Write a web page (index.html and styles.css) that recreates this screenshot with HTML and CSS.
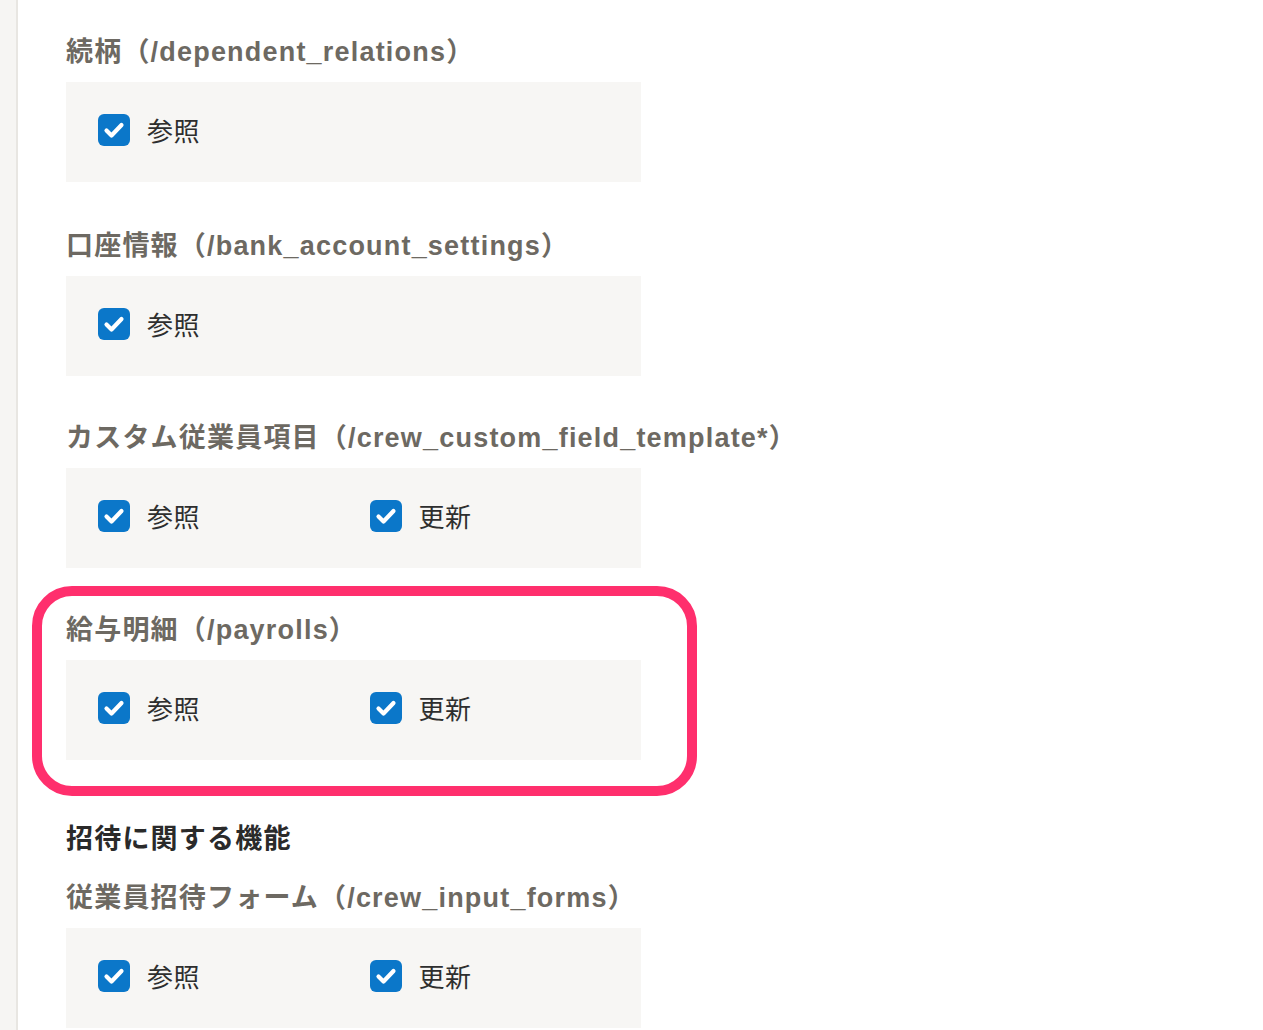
FILE: index.html
```html
<!DOCTYPE html>
<html lang="ja">
<head>
<meta charset="utf-8">
<link rel="stylesheet" href="styles.css">
</head>
<body>
<div class="layout">
  <aside class="sidebar"></aside>
  <main class="content">
    <section class="perm">
      <h3 class="perm-title">続柄（/dependent_relations）</h3>
      <div class="perm-box">
        <label class="check"><span class="box"><svg viewBox="0 0 32 32"><path d="M8.5 16.5 L13.5 21.5 L23.5 11" /></svg></span><span class="label">参照</span></label>
      </div>
    </section>
    <section class="perm">
      <h3 class="perm-title">口座情報（/bank_account_settings）</h3>
      <div class="perm-box">
        <label class="check"><span class="box"><svg viewBox="0 0 32 32"><path d="M8.5 16.5 L13.5 21.5 L23.5 11" /></svg></span><span class="label">参照</span></label>
      </div>
    </section>
    <section class="perm">
      <h3 class="perm-title">カスタム従業員項目（/crew_custom_field_template*）</h3>
      <div class="perm-box">
        <label class="check"><span class="box"><svg viewBox="0 0 32 32"><path d="M8.5 16.5 L13.5 21.5 L23.5 11" /></svg></span><span class="label">参照</span></label>
        <label class="check"><span class="box"><svg viewBox="0 0 32 32"><path d="M8.5 16.5 L13.5 21.5 L23.5 11" /></svg></span><span class="label">更新</span></label>
      </div>
    </section>
    <section class="perm highlighted">
      <h3 class="perm-title">給与明細（/payrolls）</h3>
      <div class="perm-box">
        <label class="check"><span class="box"><svg viewBox="0 0 32 32"><path d="M8.5 16.5 L13.5 21.5 L23.5 11" /></svg></span><span class="label">参照</span></label>
        <label class="check"><span class="box"><svg viewBox="0 0 32 32"><path d="M8.5 16.5 L13.5 21.5 L23.5 11" /></svg></span><span class="label">更新</span></label>
      </div>
    </section>
    <h2 class="group-title">招待に関する機能</h2>
    <section class="perm">
      <h3 class="perm-title">従業員招待フォーム（/crew_input_forms）</h3>
      <div class="perm-box">
        <label class="check"><span class="box"><svg viewBox="0 0 32 32"><path d="M8.5 16.5 L13.5 21.5 L23.5 11" /></svg></span><span class="label">参照</span></label>
        <label class="check"><span class="box"><svg viewBox="0 0 32 32"><path d="M8.5 16.5 L13.5 21.5 L23.5 11" /></svg></span><span class="label">更新</span></label>
      </div>
    </section>
  </main>
</div>
</body>
</html>
```

FILE: styles.css
```css
html, body {
  margin: 0;
  padding: 0;
  background: #ffffff;
  height: 100%;
  overflow: hidden;
}
body {
  font-family: "Noto Sans CJK JP", "Noto Sans", sans-serif;
}
.layout {
  display: flex;
  min-height: 1030px;
}
.sidebar {
  width: 16px;
  flex: 0 0 16px;
  background: #f6f5f3;
  border-right: 2px solid #e8e6e2;
}
.content {
  padding: 34px 0 0 48px;
  flex: 1;
}
.perm {
  margin: 0 0 44px 0;
  position: relative;
}
.perm:first-child {
  margin-bottom: 46px;
}
.perm-title {
  margin: 0 0 12px 0;
  font-family: "Liberation Sans", "Noto Sans CJK JP", sans-serif;
  font-size: 27px;
  line-height: 36px;
  font-weight: 700;
  color: #6d6962;
  letter-spacing: 1.2px;
  white-space: nowrap;
}
.perm-box {
  width: 575px;
  height: 100px;
  background: #f7f6f4;
  box-sizing: border-box;
  padding: 0 0 4px 32px;
  display: flex;
  align-items: center;
}
.check {
  display: flex;
  align-items: center;
  width: 273px;
}
.box {
  width: 32px;
  height: 32px;
  border-radius: 6px;
  background: #0b77c9;
  display: flex;
  flex: 0 0 32px;
}
.box svg {
  width: 32px;
  height: 32px;
}
.box path {
  fill: none;
  stroke: #ffffff;
  stroke-width: 4.2;
  stroke-linecap: round;
  stroke-linejoin: round;
}
.label {
  margin-left: 17px;
  font-size: 26px;
  line-height: 36px;
  color: #2e2e2e;
  font-weight: 400;
  letter-spacing: 0.5px;
}
.highlighted {
  margin-bottom: 0;
}
.highlighted::before {
  content: "";
  position: absolute;
  left: -34px;
  top: -26px;
  width: 665px;
  height: 210px;
  box-sizing: border-box;
  border: 10px solid #ff2f6d;
  border-radius: 40px;
  pointer-events: none;
}
.group-title {
  margin: 59px 0 25px 0;
  font-size: 27px;
  line-height: 36px;
  font-weight: 700;
  color: #2a2a2a;
  letter-spacing: 1.2px;
}
```
